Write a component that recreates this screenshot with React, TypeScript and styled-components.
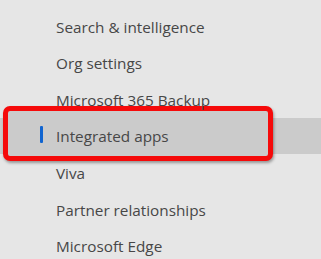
import React from "react";
import styled, { createGlobalStyle } from "styled-components";

const GlobalStyle = createGlobalStyle`
  html, body {
    margin: 0;
    padding: 0;
    background: #e6e6e6;
  }
  body {
    font-family: "Open Sans", "Noto Sans", sans-serif;
  }
`;

const items = [
  "Search & intelligence",
  "Org settings",
  "Microsoft 365 Backup",
  "Integrated apps",
  "Viva",
  "Partner relationships",
  "Microsoft Edge",
];

const SELECTED = "Integrated apps";

export default function App() {
  return (
    <>
      <GlobalStyle />
      <Nav>
        <NavList>
          {items.map((label) => (
            <NavItem key={label} $selected={label === SELECTED}>
              {label === SELECTED && (
                <>
                  <Highlight />
                  <Indicator />
                </>
              )}
              <NavLabel>{label}</NavLabel>
            </NavItem>
          ))}
        </NavList>
      </Nav>
    </>
  );
}

const Nav = styled.nav`
  width: 321px;
  height: 259px;
  overflow: hidden;
  padding-top: 8px;
  box-sizing: border-box;
  background: #e6e6e6;
`;

const NavList = styled.ul`
  list-style: none;
  margin: 0;
  padding: 0;
  display: flex;
  flex-direction: column;
`;

const NavItem = styled.li<{ $selected?: boolean }>`
  position: relative;
  height: 36.6px;
  display: flex;
  align-items: center;
  padding-left: 56px;
  background: ${(p) => (p.$selected ? "#cbcbcb" : "transparent")};
`;

const NavLabel = styled.span`
  position: relative;
  z-index: 2;
  top: 1px;
  font-size: 15.3px;
  color: #474747;
  line-height: 1;
`;

const Indicator = styled.span`
  position: absolute;
  z-index: 2;
  left: 40px;
  top: 8px;
  width: 3px;
  height: 17px;
  border-radius: 1px;
  background: #1064d0;
`;

const Highlight = styled.span`
  position: absolute;
  z-index: 1;
  left: 3px;
  top: -12px;
  width: 270px;
  height: 55px;
  box-sizing: border-box;
  border: 5px solid #f50a0a;
  border-radius: 7px;
  background: #cbcbcb;
  box-shadow: 1px 2px 3px rgba(0, 0, 0, 0.35);
`;
